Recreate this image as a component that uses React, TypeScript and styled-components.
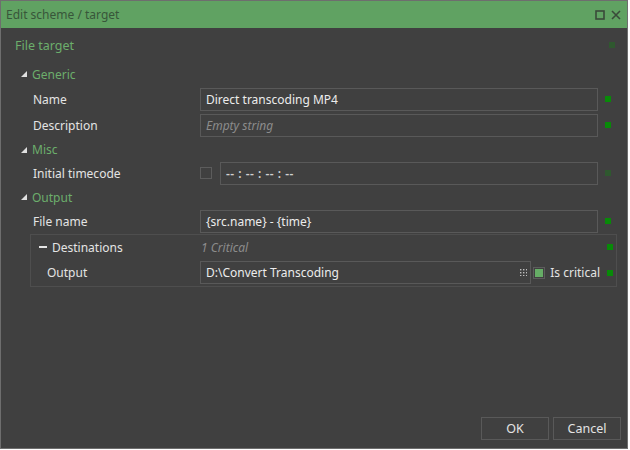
import styled, { createGlobalStyle } from "styled-components";

const GlobalStyle = createGlobalStyle`
  html, body {
    margin: 0;
    padding: 0;
    background: #ffffff;
  }
  body {
    font-family: "Noto Sans", "Open Sans", sans-serif;
    font-size: 12px;
  }
`

const Window = styled.div`
  width: 626px;
  height: 447px;
  border: 1px solid #6e6e6e;
  background: #404040;
  display: flex;
  flex-direction: column;
  color: #e2e2e2;
`

const TitleBar = styled.div`
  height: 27px;
  flex-shrink: 0;
  background: #60a262;
  display: flex;
  align-items: center;
  padding: 0 6px 0 5px;
  color: #38563a;
  font-size: 12px;
`

const Title = styled.span`
  flex: 1;
`

const TitleButtons = styled.div`
  display: flex;
  align-items: center;
  gap: 6px;
`

const Body = styled.div`
  flex: 1;
  display: flex;
  flex-direction: column;
`

const SectionHeader = styled.div`
  height: 34px;
  display: grid;
  grid-template-columns: 1fr 29px;
  align-items: center;
  padding-left: 14px;
  color: #6cae6c;
  font-size: 12.5px;
`

const CategoryRow = styled.div<{ $h?: number }>`
  height: ${(p) => p.$h ?? 24}px;
  display: flex;
  align-items: center;
  gap: 5px;
  padding-left: 20px;
  color: #6cae6c;
`

const PropRow = styled.div<{ $h?: number; $indent?: number }>`
  height: ${(p) => p.$h ?? 26}px;
  display: grid;
  grid-template-columns: ${(p) => 199 - (p.$indent ?? 32)}px 1fr 29px;
  align-items: center;
  padding-left: ${(p) => p.$indent ?? 32}px;
`

const Label = styled.div`
  display: flex;
  align-items: center;
  gap: 5px;
  color: #e4e4e4;
`

const Field = styled.div<{ $italic?: boolean; $muted?: boolean; $plain?: boolean }>`
  height: 23px;
  box-sizing: border-box;
  border: 1px solid ${(p) => (p.$plain ? "transparent" : "#595959")};
  padding: 0 3px 0 ${(p) => (p.$plain ? 0 : 5)}px;
  display: flex;
  align-items: center;
  flex: 1;
  min-width: 0;
  color: ${(p) => (p.$muted ? "#8c8c8c" : "#ececec")};
  font-style: ${(p) => (p.$italic ? "italic" : "normal")};
  white-space: nowrap;
`

const FieldText = styled.span`
  flex: 1;
`

const Editor = styled.div<{ $gap?: number }>`
  display: flex;
  align-items: center;
  gap: ${(p) => p.$gap ?? 8}px;
  min-width: 0;
`

const Status = styled.div<{ $dim?: boolean; $offset?: number }>`
  width: 6px;
  height: 6px;
  margin-left: ${(p) => p.$offset ?? 7}px;
  background: ${(p) => (p.$dim ? "#2f582f" : "#088a08")};
`

const CheckBox = styled.div<{ $checked?: boolean }>`
  width: 12px;
  height: 12px;
  box-sizing: border-box;
  border: 1px solid #5c5c5c;
  flex-shrink: 0;
  display: flex;
  align-items: center;
  justify-content: center;
  &::after {
    content: "";
    display: ${(p) => (p.$checked ? "block" : "none")};
    width: 8px;
    height: 8px;
    background: #66ad66;
  }
`

const Timecode = styled.span`
  letter-spacing: 0.5px;
  color: #cfcfcf;
  font-weight: 600;
`

const Group = styled.div`
  margin: 1px 10px 0 29px;
  border: 1px solid #4e4e4e;
  display: flex;
  flex-direction: column;
`

const GroupRow = styled(PropRow)`
  grid-template-columns: ${(p) => 169 - (p.$indent ?? 16)}px 1fr 16px;
`

const Collapse = styled.span`
  width: 8px;
  height: 2px;
  background: #e4e4e4;
  display: inline-block;
  margin-left: 4px;
`

const Footer = styled.div`
  display: flex;
  justify-content: flex-end;
  gap: 4px;
  padding: 0 6px 8px 0;
`

const Button = styled.button`
  width: 68px;
  height: 23px;
  background: #404040;
  border: 1px solid #595959;
  color: #e4e4e4;
  font-family: inherit;
  font-size: 12.5px;
  padding: 0;
`

const CriticalWrap = styled.div`
  display: flex;
  align-items: center;
  gap: 5px;
  flex-shrink: 0;
  color: #e4e4e4;
  white-space: nowrap;
`

const Spacer = styled.div`
  flex: 1;
`

function Triangle() {
  return (
    <svg width="6" height="6" viewBox="0 0 6 6">
      <polygon points="6,0 6,6 0,6" fill="#e0e0e0" />
    </svg>
  )
}

function DotsIcon() {
  return (
    <svg width="7" height="7" viewBox="0 0 7 7">
      {[0, 3, 6].map((y) =>
        [0, 3, 6].map((x) => <rect key={`${x}-${y}`} x={x} y={y} width="1.4" height="1.4" fill="#bdbdbd" />)
      )}
    </svg>
  )
}

export default function App() {
  return (
    <>
      <GlobalStyle />
      <Window>
        <TitleBar>
          <Title>Edit scheme / target</Title>
          <TitleButtons>
            <svg width="10" height="10" viewBox="0 0 10 10">
              <rect x="1" y="1" width="8" height="8" fill="none" stroke="#3a4a3a" strokeWidth="1.6" />
            </svg>
            <svg width="10" height="10" viewBox="0 0 10 10">
              <path d="M1 1 L9 9 M9 1 L1 9" stroke="#3a4a3a" strokeWidth="1.6" />
            </svg>
          </TitleButtons>
        </TitleBar>
        <Body>
          <SectionHeader>
            <span>File target</span>
            <Status $dim $offset={11} />
          </SectionHeader>

          <CategoryRow><Triangle />Generic</CategoryRow>
          <PropRow>
            <Label>Name</Label>
            <Field>Direct transcoding MP4</Field>
            <Status />
          </PropRow>
          <PropRow>
            <Label>Description</Label>
            <Field $italic $muted>Empty string</Field>
            <Status />
          </PropRow>

          <CategoryRow $h={23}><Triangle />Misc</CategoryRow>
          <PropRow $h={24}>
            <Label>Initial timecode</Label>
            <Editor>
              <CheckBox />
              <Field><Timecode>-- : -- : -- : --</Timecode></Field>
            </Editor>
            <Status $dim />
          </PropRow>

          <CategoryRow><Triangle />Output</CategoryRow>
          <PropRow $h={24}>
            <Label>File name</Label>
            <Field>{"{src.name} - {time}"}</Field>
            <Status />
          </PropRow>

          <Group>
            <GroupRow $h={24} $indent={4}>
              <Label><Collapse />Destinations</Label>
              <Field $plain $italic $muted>1 Critical</Field>
              <Status />
            </GroupRow>
            <GroupRow $h={27} $indent={16}>
              <Label>Output</Label>
              <Editor $gap={2}>
                <Field>
                  <FieldText>D:\Convert Transcoding</FieldText>
                  <DotsIcon />
                </Field>
                <CriticalWrap>
                  <CheckBox $checked />
                  Is critical
                </CriticalWrap>
              </Editor>
              <Status />
            </GroupRow>
          </Group>

          <Spacer />
          <Footer>
            <Button>OK</Button>
            <Button>Cancel</Button>
          </Footer>
        </Body>
      </Window>
    </>
  )
}
